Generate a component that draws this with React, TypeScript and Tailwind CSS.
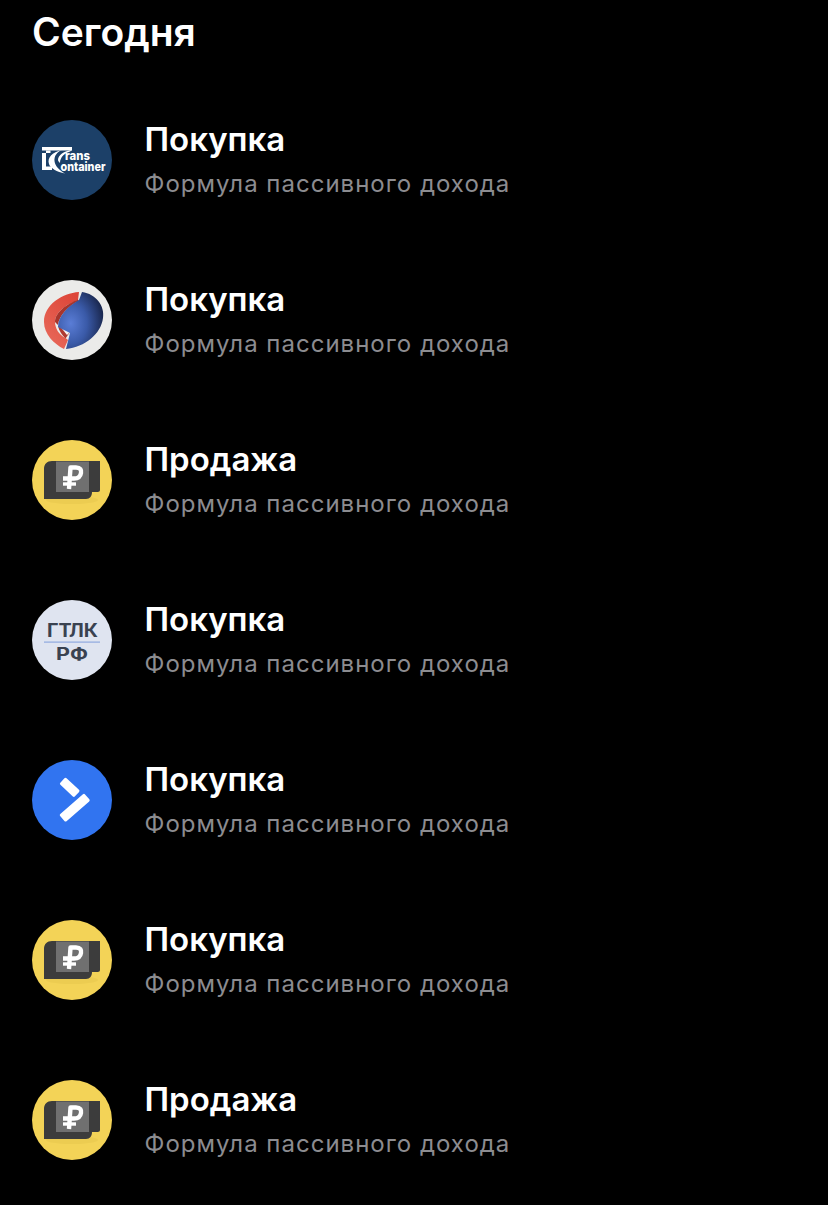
import type { ReactNode } from "react";

type LogoKind = "trans" | "sphere" | "ruble" | "gtlk" | "arrow";

type Operation = { title: string; logo: LogoKind };

const operations: Operation[] = [
  { title: "Покупка", logo: "trans" },
  { title: "Покупка", logo: "sphere" },
  { title: "Продажа", logo: "ruble" },
  { title: "Покупка", logo: "gtlk" },
  { title: "Покупка", logo: "arrow" },
  { title: "Покупка", logo: "ruble" },
  { title: "Продажа", logo: "ruble" },
];

const FONT = "Inter, 'Liberation Sans', sans-serif";

function LogoFrame({ children }: { children: ReactNode }) {
  return (
    <svg viewBox="0 0 80 80" className="w-20 h-20 shrink-0">
      {children}
    </svg>
  );
}

function TransLogo() {
  return (
    <LogoFrame>
      <circle cx="40" cy="40" r="40" fill="#1c4068" />
      {/* T and the arcs */}
      <path d="M10 27H40V30.500H10Z" fill="#fff" />
      <path d="M14 30.500H18.500V33H14Z" fill="#fff" />
      <path d="M10 33H14V46.500H20V50H10Z" fill="#fff" />
      <path d="M30 30C20 32 15 38 17 44C18 48 25 52 33 53.500C27 50 23 46 22.500 41C22 36 25 32 30 30Z" fill="#fff" />
      <path d="M40 30C32 31 26 35 26 40C26 41 27 42 28 43C28 37 33 33 38 31.500Z" fill="#fff" />
      <text x="33" y="40" fontFamily={FONT} fontSize="12.500" fontWeight="800" fill="#fff" textLength="25" lengthAdjust="spacingAndGlyphs">rans</text>
      <text x="28.500" y="50.500" fontFamily={FONT} fontSize="12.500" fontWeight="800" fill="#fff" textLength="45" lengthAdjust="spacingAndGlyphs">ontainer</text>
    </LogoFrame>
  );
}

function SphereLogo() {
  return (
    <LogoFrame>
      <defs>
        <radialGradient id="sphereBlue" cx="0.28" cy="0.55" r="0.8">
          <stop offset="0" stopColor="#5a7dd6" />
          <stop offset="0.45" stopColor="#3a5aa8" />
          <stop offset="1" stopColor="#141e3e" />
        </radialGradient>
        <linearGradient id="sphereRed" x1="0.8" y1="0" x2="0.2" y2="1">
          <stop offset="0" stopColor="#dd4538" />
          <stop offset="1" stopColor="#e8695a" />
        </linearGradient>
      </defs>
      <circle cx="40" cy="40" r="40" fill="#ebebe9" />
      <path d="M47 12C30 13 12 25 12 42C12 54 22 64 32 69L36 60L33.500 58C27 55 23 48 23 42C23 32 35 24 46 20Z" fill="url(#sphereRed)" />
      <path d="M46 19.500C35 24 23 32 23 42L26 45C27 36 36 26 47 21Z" fill="#a8352c" />
      <path d="M26 46L38 52L33.500 58.500C30 55 27 51 26 46Z" fill="#b03a30" />
      <path d="M29 47.500L38 52L35 55Z" fill="#f6f3f1" />
      <path d="M50 12C64 14 73 26 71 38C69 54 53 67 34 69L38 53L26 47C26 36 36 26 47 20Z" fill="url(#sphereBlue)" />
    </LogoFrame>
  );
}

function RubleLogo() {
  return (
    <LogoFrame>
      <circle cx="40" cy="40" r="40" fill="#f3d357" />
      <ellipse cx="40" cy="60" rx="26" ry="4" fill="#d9b83f" opacity="0.25" />
      {/* dark wallet card */}
      <path d="M20 21H68V50C68 52 66 52 64 52H60C60 56 58 59 54 59H12V29C12 24 15 21 20 21Z" fill="#3c3c3c" />
      <path d="M24 21.500H57V52H24Z" fill="#707070" />
      <path d="M37 49L38.500 27.500H44C48.500 27.500 49.500 30 49 33C48.500 36.500 46 38.500 42 38.500H31" fill="none" stroke="#fff" strokeWidth="4.400" strokeLinejoin="round" />
      <path d="M31 44H44" fill="none" stroke="#fff" strokeWidth="3.400" />
    </LogoFrame>
  );
}

function GtlkLogo() {
  return (
    <LogoFrame>
      <circle cx="40" cy="40" r="40" fill="#dfe4f0" />
      <text x="15" y="37" fontFamily={FONT} fontSize="19" fontWeight="700" fill="#3a4250" textLength="51" lengthAdjust="spacingAndGlyphs">ГТЛК</text>
      <rect x="12" y="41.500" width="56" height="1.200" fill="#8fa9de" />
      <text x="24" y="60" fontFamily={FONT} fontSize="17" fontWeight="700" fill="#3a4250" textLength="32" lengthAdjust="spacingAndGlyphs">РФ</text>
    </LogoFrame>
  );
}

function ArrowLogo() {
  return (
    <LogoFrame>
      <circle cx="40" cy="40" r="40" fill="#3174f0" />
      <rect x="27.700" y="22.800" width="20" height="9" rx="1.500" fill="#fff" transform="rotate(43 37.700 27.300)" />
      <rect x="26.200" y="43" width="33" height="9.500" rx="1.500" fill="#fff" transform="rotate(-41 42.700 47.700)" />
    </LogoFrame>
  );
}

function Logo({ kind }: { kind: LogoKind }) {
  if (kind === "trans") return <TransLogo />;
  if (kind === "sphere") return <SphereLogo />;
  if (kind === "ruble") return <RubleLogo />;
  if (kind === "gtlk") return <GtlkLogo />;
  return <ArrowLogo />;
}

export default function App() {
  return (
    <div className="min-h-[1205px] bg-black font-['Inter','Liberation_Sans',sans-serif] pl-8 overflow-hidden">
      <h1 className="h-20 pt-[9px] text-[39px] leading-[46px] font-semibold text-white">Сегодня</h1>

      {operations.map((op, i) => (
        <div key={i} className="flex items-start gap-[32.5px] py-10">
          <Logo kind={op.logo} />
          <div className="flex flex-col">
            <div className="text-[33px] leading-[38px] font-semibold text-white">{op.title}</div>
            <div className="mt-[11px] text-[24px] leading-[30px] tracking-[1px] text-[#8c8c90]">Формула пассивного дохода</div>
          </div>
        </div>
      ))}
    </div>
  );
}
